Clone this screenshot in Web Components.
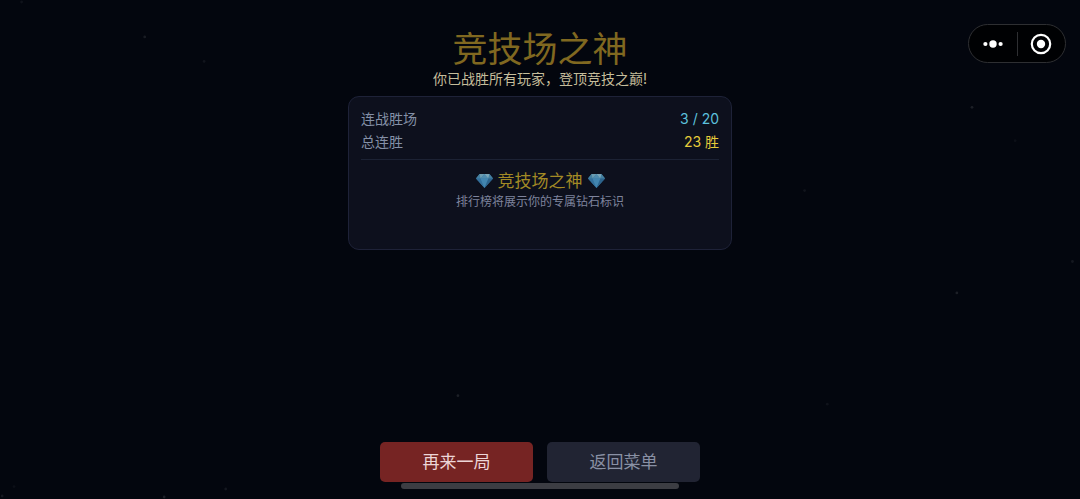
<!DOCTYPE html>
<html lang="zh-CN">
<head>
<meta charset="utf-8">
<meta name="viewport" content="width=device-width, initial-scale=1">
<title>竞技场之神</title>
<style>
    body {
        margin: 0;
        background: #03060e;
        font-family: Inter, "Noto Sans CJK SC", sans-serif;
    }
</style>
</head>
<body>
<arena-result>
    <result-title slot="title">
        竞技场之神
        <span slot="subtitle">你已战胜所有玩家，登顶竞技之巅!</span>
    </result-title>
    <result-card>
        <stat-row slot="stats" label="连战胜场" style="--value-color: #5cc0dc">3 / 20</stat-row>
        <stat-row slot="stats" label="总连胜" style="--value-color: #e5cb3a">23 胜</stat-row>
        <rank-badge slot="badge" caption="排行榜将展示你的专属钻石标识">竞技场之神</rank-badge>
    </result-card>
    <game-button slot="actions" kind="primary">再来一局</game-button>
    <game-button slot="actions">返回菜单</game-button>
</arena-result>

<script>
class StarField extends HTMLElement {

    constructor() {
        super();
        this.shadowDOM = this.attachShadow({mode: "open"});
    }

    connectedCallback() {
        // x%, y%, opacity
        const stars = [
            [2, 0.4, 0.05], [13.4, 7.4, 0.09], [18.9, 12.3, 0.06],
            [90, 21.5, 0.1], [94, 28.2, 0.04], [74.5, 38.2, 0.06],
            [99.3, 52.4, 0.07], [88.6, 58.7, 0.1], [42.4, 79.3, 0.1],
            [76.6, 81, 0.05], [1.3, 97.5, 0.04], [20.9, 98, 0.07],
            [15.2, 99.6, 0.1], [0.2, 99.4, 0.07]
        ];
        this.shadowDOM.innerHTML = `
            <style>
                :host {
                    display: block;
                    position: absolute;
                    inset: 0;
                    pointer-events: none;
                }
                svg {
                    display: block;
                    width: 100%;
                    height: 100%;
                }
            </style>
            <svg aria-hidden="true" fill="#fff">
                ${stars.map(s => `<circle cx="${s[0]}%" cy="${s[1]}%" r="1.4" opacity="${s[2]}"/>`).join("")}
            </svg>`;
    }

}

class CapsuleMenu extends HTMLElement {

    constructor() {
        super();
        this.shadowDOM = this.attachShadow({mode: "open"});
    }

    connectedCallback() {
        this.shadowDOM.innerHTML = `
            <style>
                :host {
                    display: flex;
                    align-items: center;
                    box-sizing: border-box;
                    width: 98px;
                    height: 39px;
                    border: 1px solid #2e2f32;
                    border-radius: 20px;
                    background: #000103;
                }
                button {
                    flex: 1;
                    display: flex;
                    align-items: center;
                    justify-content: center;
                    height: 100%;
                    padding: 0;
                    border: 0;
                    background: none;
                    cursor: pointer;
                }
                .line {
                    width: 1px;
                    height: 24px;
                    background: #2e2f32;
                }
            </style>
            <button type="button" aria-label="更多">
                <svg width="22" height="22" viewBox="0 0 22 22" fill="#fff">
                    <circle cx="3.4" cy="11" r="2.1"/>
                    <circle cx="11" cy="11" r="3.7"/>
                    <circle cx="18.6" cy="11" r="2.1"/>
                </svg>
            </button>
            <span class="line"></span>
            <button type="button" aria-label="关闭">
                <svg width="22" height="22" viewBox="0 0 22 22">
                    <circle cx="11" cy="11" r="9.2" fill="none" stroke="#fff" stroke-width="2.2"/>
                    <circle cx="11" cy="11" r="4.2" fill="#fff"/>
                </svg>
            </button>`;
    }

}

class ResultTitle extends HTMLElement {

    constructor() {
        super();
        this.shadowDOM = this.attachShadow({mode: "open"});
    }

    connectedCallback() {
        this.shadowDOM.innerHTML = `
            <style>
                :host {
                    display: block;
                    text-align: center;
                }
                h1, p {
                    margin: 0;
                    font-weight: 400;
                }
                h1 {
                    font-size: 35px;
                    line-height: 42px;
                    color: #806820;
                }
                p {
                    font-size: 14px;
                    line-height: 18px;
                    color: #c5bd9b;
                }
            </style>
            <h1><slot></slot></h1>
            <p><slot name="subtitle"></slot></p>`;
    }

}

class StatRow extends HTMLElement {

    constructor() {
        super();
        this.shadowDOM = this.attachShadow({mode: "open"});
    }

    connectedCallback() {
        this.shadowDOM.innerHTML = `
            <style>
                :host {
                    display: flex;
                    justify-content: space-between;
                    font-size: 14px;
                    line-height: 23px;
                    color: #8490a7;
                }
                .value {
                    color: var(--value-color);
                }
            </style>
            <span>${this.getAttribute("label")}</span>
            <span class="value"><slot></slot></span>`;
    }

}

class GemIcon extends HTMLElement {

    constructor() {
        super();
        this.shadowDOM = this.attachShadow({mode: "open"});
    }

    connectedCallback() {
        this.shadowDOM.innerHTML = `
            <style>
                :host {
                    display: block;
                    width: 17px;
                    height: 14px;
                }
                svg {
                    display: block;
                }
            </style>
            <svg width="17" height="14" viewBox="0 0 17 14" aria-hidden="true">
                <path d="M3.5 0h10L17 4.6 8.5 14 0 4.6z" fill="#3a7aa5"/>
                <path d="M3.5 0 0 4.6h4.6z" fill="#447f9f"/>
                <path d="M3.5 0 4.6 4.6 8.5 0z" fill="#6c9cb0"/>
                <path d="M8.5 0 4.6 4.6h7.8z" fill="#4f8cae"/>
                <path d="M8.5 0 12.4 4.6 13.5 0z" fill="#7aa6b8"/>
                <path d="M13.5 0 17 4.6h-4.6z" fill="#45809f"/>
                <path d="M0 4.6h4.6L8.5 14z" fill="#336f9b"/>
                <path d="M4.6 4.6h7.8L8.5 14z" fill="#4285b0"/>
                <path d="M12.4 4.6H17L8.5 14z" fill="#2c638c"/>
            </svg>`;
    }

}

class RankBadge extends HTMLElement {

    constructor() {
        super();
        this.shadowDOM = this.attachShadow({mode: "open"});
    }

    connectedCallback() {
        this.shadowDOM.innerHTML = `
            <style>
                :host {
                    display: block;
                    text-align: center;
                }
                .name {
                    display: flex;
                    align-items: center;
                    justify-content: center;
                    gap: 5px;
                    font-size: 17px;
                    line-height: 22px;
                    color: #a38a25;
                }
                p {
                    margin: 0;
                    font-size: 12px;
                    line-height: 20px;
                    color: #7e839c;
                }
            </style>
            <div class="name">
                <gem-icon></gem-icon>
                <span><slot></slot></span>
                <gem-icon></gem-icon>
            </div>
            <p>${this.getAttribute("caption")}</p>`;
    }

}

class ResultCard extends HTMLElement {

    constructor() {
        super();
        this.shadowDOM = this.attachShadow({mode: "open"});
    }

    connectedCallback() {
        this.shadowDOM.innerHTML = `
            <style>
                :host {
                    display: block;
                    box-sizing: border-box;
                    width: 100%;
                    max-width: 384px;
                    padding: 10px 12px 37px;
                    border: 1px solid #1e2238;
                    border-radius: 11px;
                    background: #0d101d;
                }
                .badge {
                    margin-top: 6px;
                    padding-top: 10px;
                    border-top: 1px solid #1c2234;
                }
            </style>
            <slot name="stats"></slot>
            <div class="badge"><slot name="badge"></slot></div>`;
    }

}

class GameButton extends HTMLElement {

    constructor() {
        super();
        this.shadowDOM = this.attachShadow({mode: "open"});
    }

    connectedCallback() {
        this.shadowDOM.innerHTML = `
            <style>
                :host {
                    display: block;
                    flex: 1;
                }
                button {
                    display: block;
                    width: 100%;
                    padding: 8px;
                    border: 0;
                    border-radius: 5px;
                    background: #212433;
                    color: #8990a4;
                    font-family: inherit;
                    font-size: 17px;
                    line-height: 24px;
                    cursor: pointer;
                }
                :host([kind="primary"]) button {
                    background: #762423;
                    color: #edd6d8;
                }
            </style>
            <button type="button"><slot></slot></button>`;
    }

}

class ArenaResult extends HTMLElement {

    constructor() {
        super();
        this.shadowDOM = this.attachShadow({mode: "open"});
    }

    connectedCallback() {
        this.shadowDOM.innerHTML = `
            <style>
                :host {
                    display: block;
                    position: relative;
                }
                main {
                    display: flex;
                    flex-direction: column;
                    align-items: center;
                    gap: 8px;
                    box-sizing: border-box;
                    min-height: 100vh;
                    padding: 28px 16px 17px;
                    position: relative;
                }
                .actions {
                    display: flex;
                    gap: 14px;
                    width: 100%;
                    max-width: 320px;
                    margin-top: auto;
                }
                capsule-menu {
                    position: absolute;
                    top: 24px;
                    right: 14px;
                }
                /* system home bar, lies over the page */
                .home-bar {
                    position: absolute;
                    bottom: 10px;
                    left: 50%;
                    width: 278px;
                    height: 6px;
                    margin-left: -139px;
                    border-radius: 3px;
                    background: #3c3d43;
                }
            </style>
            <star-field></star-field>
            <main>
                <slot name="title"></slot>
                <slot></slot>
                <div class="actions"><slot name="actions"></slot></div>
            </main>
            <capsule-menu></capsule-menu>
            <div class="home-bar"></div>`;
    }

}

customElements.define("star-field", StarField);
customElements.define("capsule-menu", CapsuleMenu);
customElements.define("result-title", ResultTitle);
customElements.define("stat-row", StatRow);
customElements.define("gem-icon", GemIcon);
customElements.define("rank-badge", RankBadge);
customElements.define("result-card", ResultCard);
customElements.define("game-button", GameButton);
customElements.define("arena-result", ArenaResult);
</script>
</body>
</html>
